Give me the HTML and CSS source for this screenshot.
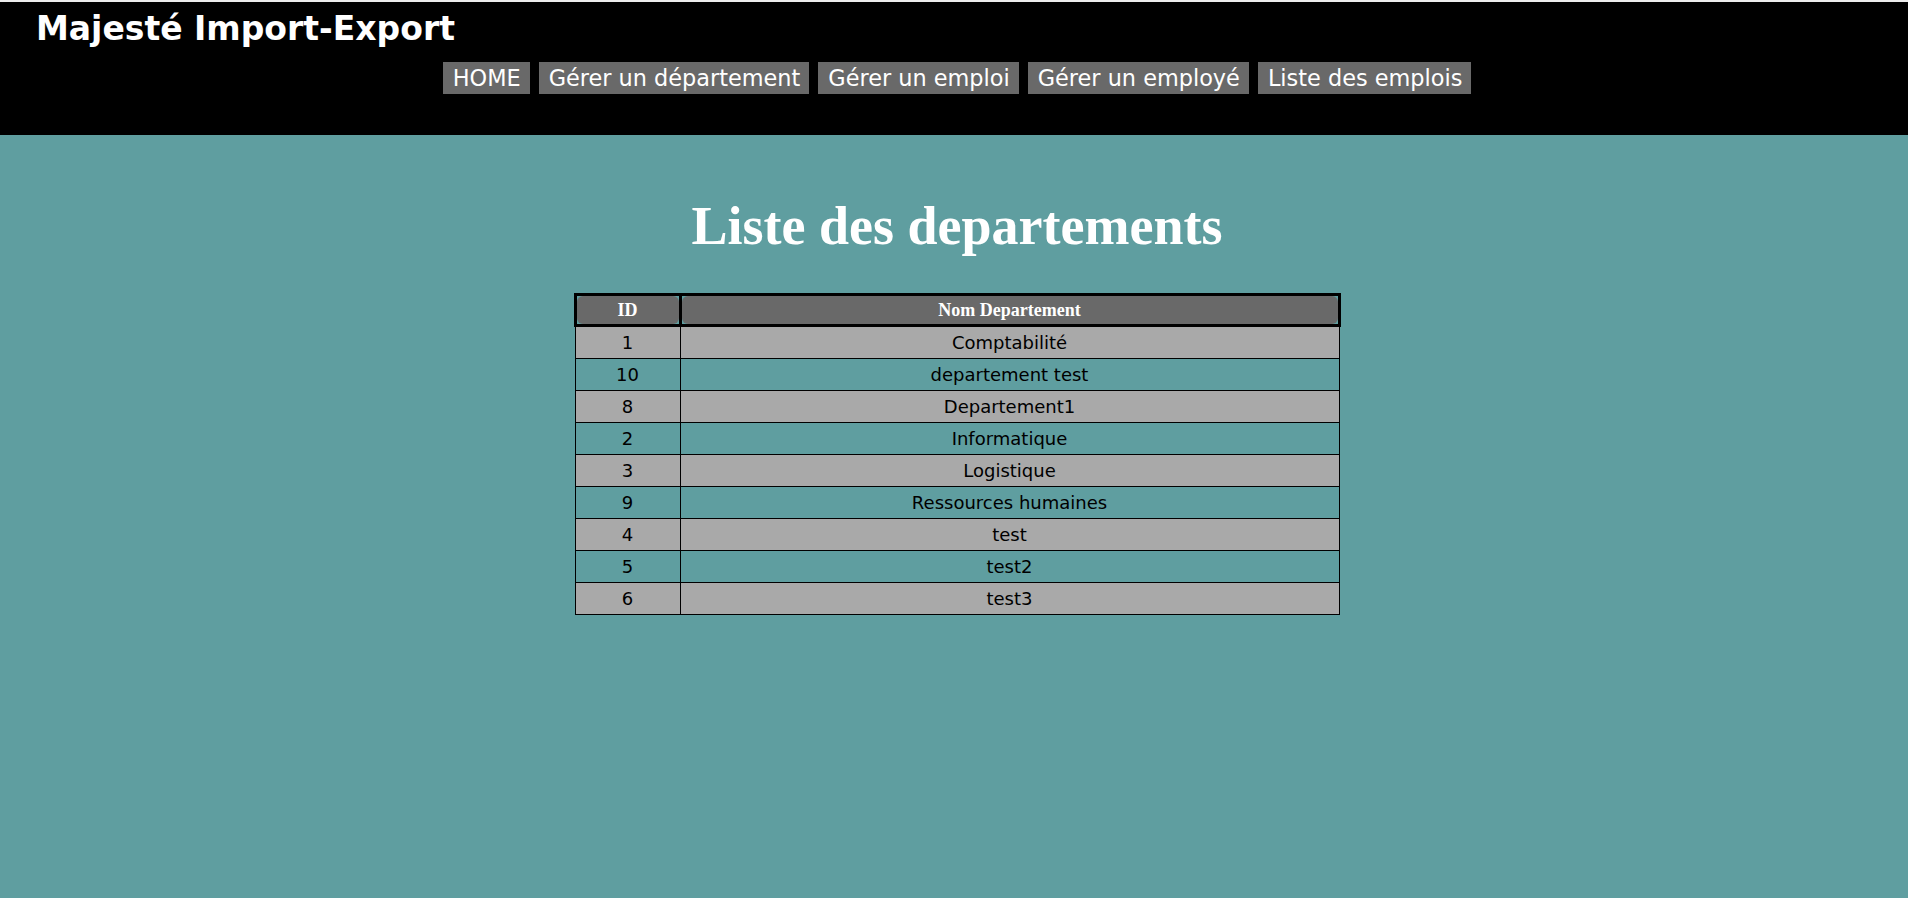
FILE: index.html
```html
<!DOCTYPE html>
<html lang="fr">
<head>
<meta charset="utf-8">
<title>Liste des departements</title>
<link rel="stylesheet" href="styles.css">
</head>
<body>
<header class="site-header">
  <div class="brand">Majesté Import-Export</div>
  <nav class="menu">
    <a class="menu-item" href="#">HOME</a>
    <a class="menu-item" href="#">Gérer un département</a>
    <a class="menu-item" href="#">Gérer un emploi</a>
    <a class="menu-item" href="#">Gérer un employé</a>
    <a class="menu-item" href="#">Liste des emplois</a>
  </nav>
</header>
<main class="content">
  <h1 class="page-title">Liste des departements</h1>
  <table class="dept-table">
    <thead>
      <tr>
        <th class="col-id"><div class="th-inner">ID</div></th>
        <th><div class="th-inner">Nom Departement</div></th>
      </tr>
    </thead>
    <tbody>
      <tr class="odd"><td>1</td><td>Comptabilité</td></tr>
      <tr class="even"><td>10</td><td>departement test</td></tr>
      <tr class="odd"><td>8</td><td>Departement1</td></tr>
      <tr class="even"><td>2</td><td>Informatique</td></tr>
      <tr class="odd"><td>3</td><td>Logistique</td></tr>
      <tr class="even"><td>9</td><td>Ressources humaines</td></tr>
      <tr class="odd"><td>4</td><td>test</td></tr>
      <tr class="even"><td>5</td><td>test2</td></tr>
      <tr class="odd"><td>6</td><td>test3</td></tr>
    </tbody>
  </table>
</main>
</body>
</html>
```
FILE: styles.css
```css
html, body {
  margin: 0;
  padding: 0;
}
body {
  background: #5f9ea0;
  min-height: 100vh;
  border-top: 2px solid #ececec;
  box-sizing: border-box;
  font-family: "DejaVu Sans", Verdana, sans-serif;
}
.site-header {
  background: #000;
  padding: 8px 0 41px 0;
}
.brand {
  font-family: "Comic Sans MS", "DejaVu Sans", sans-serif;
  font-weight: bold;
  font-size: 33px;
  line-height: 38px;
  color: #fff;
  margin-left: 36px;
}
.menu {
  display: flex;
  justify-content: center;
  gap: 9px;
  margin-top: 14px;
  padding-left: 6px;
}
.menu-item {
  display: block;
  background: #696969;
  color: #fff;
  text-decoration: none;
  font-family: "DejaVu Sans", Tahoma, sans-serif;
  font-size: 22.4px;
  line-height: 26px;
  padding: 3px 9px 3px 10px;
}
.content {
  padding-top: 60px;
  padding-left: 6px;
}
.page-title {
  margin: 0 0 36px 0;
  text-align: center;
  color: #fff;
  font-family: "Liberation Serif", "Times New Roman", serif;
  font-weight: bold;
  font-size: 54px;
  line-height: 62px;
}
.dept-table {
  width: 767px;
  margin: 0 auto;
  border-collapse: collapse;
}
.dept-table th {
  border: 3px solid #000;
  padding: 0;
  background: #5f9ea0;
}
.dept-table .col-id {
  width: 102px;
}
.th-inner {
  background: #696969;
  border-radius: 6px;
  color: #fff;
  font-family: "Liberation Serif", "Times New Roman", serif;
  font-weight: bold;
  font-size: 18px;
  line-height: 28px;
  text-align: center;
}
.dept-table td {
  border: 1px solid #000;
  padding: 0;
  text-align: center;
  color: #000;
  font-size: 18px;
  line-height: 31px;
}
.dept-table .odd {
  background: #a9a9a9;
}
.dept-table .even {
  background: #5f9ea0;
}
```
